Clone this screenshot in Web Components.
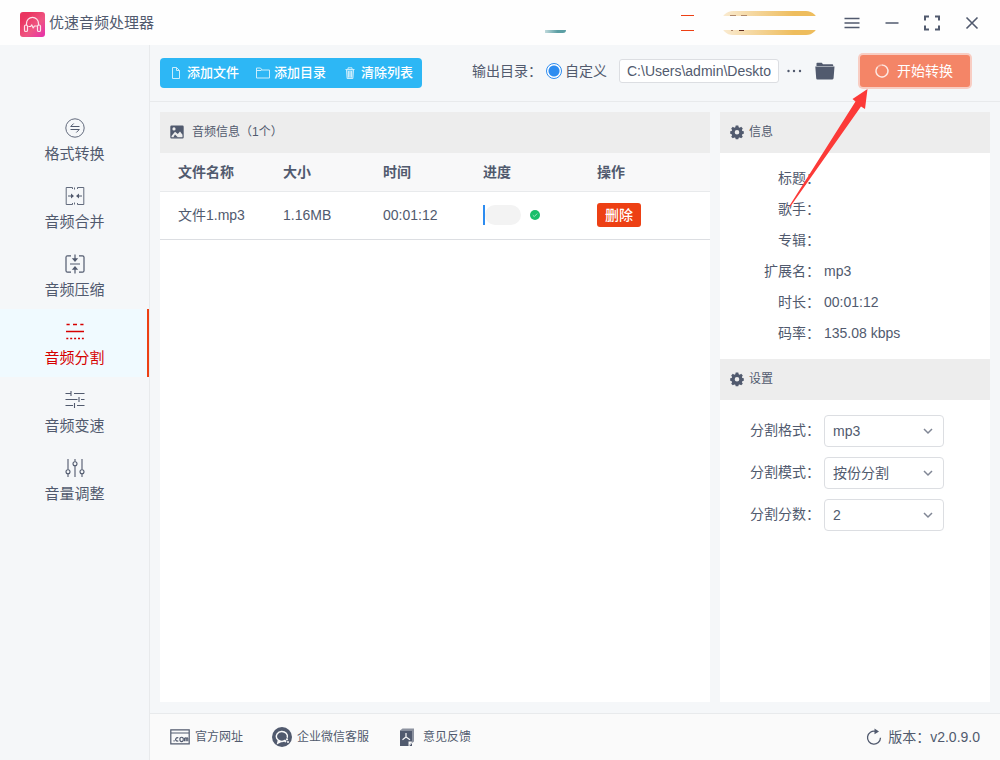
<!DOCTYPE html>
<html lang="zh-CN">
<head>
<meta charset="utf-8">
<meta name="viewport" content="width=device-width, initial-scale=1">
<title>优速音频处理器</title>
<style>
  html, body { margin: 0; }
  body {
    font: 14px/20px "Liberation Sans", "Noto Sans CJK SC", sans-serif;
    color: #515a6e;
    --ink: #515a6e;
    --line: #e8eaec;
    --bg: #f5f7f9;
    --red: #ed4014;
  }
</style>
</head>
<body>
<audio-app></audio-app>
<script>
const define = (name, html, setup) => {
  const tpl = document.createElement('template');
  tpl.innerHTML = html;
  customElements.define(name, class extends HTMLElement {
    constructor() {
      super();
      this.attachShadow({ mode: 'open' }).append(tpl.content.cloneNode(true));
    }
    connectedCallback() { if (setup) setup(this, this.shadowRoot); }
  });
};

const S = 'fill="none" stroke="currentColor"';
const ICONS = {
  logo: ['0 0 25 25', `<defs><linearGradient id="g" x1="0" y1="0" x2="1" y2="1"><stop offset="0.2" stop-color="#ea3560"/><stop offset="0.6" stop-color="#ef5583"/><stop offset="1" stop-color="#e52fae"/></linearGradient></defs><rect width="25" height="25" rx="3" fill="url(#g)"/><g fill="none" stroke="#fde3ea" stroke-width="1.2" stroke-linecap="round" stroke-linejoin="round"><path d="M6.500 13V11.500a6 6.200 0 0 1 12 0V13"/><rect x="4.500" y="13" width="3" height="6.500" rx="1.300"/><rect x="17.500" y="13" width="3" height="6.500" rx="1.300"/><path d="M8.800 14.500h1.800l1.200-1.600 1.400 3 1.300-1.900h2"/></g>`],
  menu: ['0 0 16 16', `<path ${S} stroke-width="1.500" d="M0.500 3.500h15M0.500 8h15M0.500 12.500h15"/>`],
  min: ['0 0 16 16', `<path ${S} stroke-width="1.500" d="M1.500 8h13"/>`],
  full: ['0 0 16 16', `<path ${S} stroke-width="2" d="M1 5.500V1.500h4M11 1.500h4v4M15 10.500v4h-4M5 14.500H1v-4"/>`],
  close: ['0 0 16 16', `<path ${S} stroke-width="1.600" d="M2.500 2.500l11 11M13.500 2.500l-11 11"/>`],
  file: ['0 0 14 14', `<path ${S} d="M3.500 1.500h4l3 3v8h-7zM7.500 1.500v3h3"/>`],
  dir: ['0 0 14 14', `<path ${S} d="M0.500 12V2h4l1.500 2h7.500v8zM0.500 4.500h5"/>`],
  trash: ['0 0 14 14', `<path fill="currentColor" opacity=".4" d="M3.500 4h7l-.6 8.500H4.100z"/><path ${S} d="M2.500 3.500h9M5 3V1.800h4V3M3.500 4l.6 8.500h5.800l.6-8.500M5.500 5v6.500M7 5v6.500M8.500 5v6.500"/>`],
  more: ['0 0 16 16', `<g fill="currentColor"><circle cx="2.500" cy="8" r="1.200"/><circle cx="8" cy="8" r="1.200"/><circle cx="14" cy="8" r="1.200"/></g>`],
  folder: ['0 0 20 18', `<path fill="currentColor" d="M1.500 4V1.500q0-.7.7-.7h4.600l1.200 1.400h9.300q.9 0 .9.900V4z"/><path fill="currentColor" d="M.3 4.600h19.200l-.9 11.400q-.1 1.400-1.200 1.400H2.300q-1 0-1.100-1.200z"/>`],
  spin: ['0 0 16 16', `<circle ${S} cx="8" cy="8" r="6" opacity=".45" stroke-width="1.600"/><path ${S} stroke-width="1.200" opacity=".7" d="M3.500 4a6 6 0 1 0 4.500-2"/>`],
  convert: ['0 0 20 20', `<circle ${S} cx="10" cy="10" r="9.200" stroke-width=".9"/><path ${S} stroke-width="1" d="M14.500 8.500H5.700l3-3M5.500 11.500h8.800l-3 3"/>`],
  merge: ['0 0 20 20', `<path ${S} d="M7.500 3V1.500H1.200v17h6.300V17M12.500 3V1.500h6.300v17h-6.300V17M9.500 1.500v2M9.500 16.500v2" stroke-width=".9"/><path ${S} d="M3 10h4M17 10h-4"/><path fill="currentColor" d="M6 7.500L9 10l-3 2.500zM14 7.500L11 10l3 2.500z"/>`],
  compress: ['0 0 20 20', `<path ${S} stroke-width="1.200" d="M6 1.800H2.500q-1.500 0-1.500 1.500v13.400q0 1.500 1.500 1.500H6M14 1.800h3.500q1.500 0 1.500 1.500v13.400q0 1.500-1.500 1.500H14M5 10h10M10 .5v5M10 19.500v-5"/><path fill="currentColor" d="M6.800 4.300h6.400L10 8zM6.800 15.700h6.400L10 12z"/>`],
  split: ['0 0 20 20', `<path ${S} stroke-width="1.300" d="M1.500 2.500h3.200M8 2.500h4M15.300 2.500h3.200M1 9.500h18"/><path ${S} stroke-width="1.300" stroke-dasharray="2 1.900" d="M1.300 16.500h17.500"/>`],
  speed: ['0 0 20 20', `<path ${S} stroke-width="1.100" d="M.5 3.500h5M9 3.500h10.500M6 1v5M.5 9.500h12M16 9.500h3.500M14 7v5M.5 15.500h7.500M12 15.500h7.500M9.500 13v5"/>`],
  volume: ['0 0 20 20', `<path ${S} stroke-width="1.100" d="M3 1v10.500M3 16v3M10 1v2.500M10 8v11M17 1v10.500M17 16v3"/><g ${S} stroke-width="1.100"><circle cx="3" cy="13.700" r="2"/><circle cx="10" cy="5.700" r="2"/><circle cx="17" cy="13.700" r="2"/></g>`],
  image: ['0 0 14 14', `<path fill="currentColor" fill-rule="evenodd" d="M1.500.5h11q1.200 0 1.200 1.200v10.600q0 1.200-1.200 1.200h-11q-1.200 0-1.200-1.200V1.700Q.3.500 1.500.5zM4 2.300a1.500 1.500 0 1 0 0 3.200 1.500 1.500 0 1 0 0-3.200zM1.500 12.300h11V9.800L10 6.500 7.800 9 5 6.800 1.500 11z"/><path fill="currentColor" d="M3.300 12.500L5 9.500l3 3z"/>`],
  gear: ['0 0 14 14', `<path fill="currentColor" fill-rule="evenodd" d="M5.700.6h2.600l.4 1.700 1 .4 1.500-.9 1.600 1.600-.9 1.600.4.900 1.500.4v2.500l-1.500.4-.4 1 .9 1.500-1.600 1.600-1.500-.9-1 .4-.4 1.500H5.700l-.4-1.500-1-.4-1.500.9-1.600-1.600.9-1.500-.4-1L.2 8.800V6.300l1.500-.4.4-.9-.9-1.600 1.600-1.600 1.500.9 1-.4zM7 5a2.300 2.300 0 1 0 0 4.600A2.300 2.300 0 1 0 7 5z"/>`],
  chevron: ['0 0 14 14', `<path ${S} stroke-width="1.500" d="M3 5l4 4 4-4"/>`],
  done: ['0 0 10 10', `<circle cx="5" cy="5" r="5" fill="#19be6b"/><path fill="none" stroke="#a5e6c5" stroke-width=".9" d="M2.800 5.200l1.500 1.400 2.900-3"/>`],
  com: ['0 0 20 20', `<path ${S} stroke-width="1.200" d="M.8 2.800h18.400v14H.8zM.8 6h18.400"/><path ${S} stroke-width="1.200" d="M3.500 13.900h1.200M8.300 11.100a1.700 1.600 0 1 0 0 2.600M13.200 12.400a1.700 1.600 0 1 0-3.200 0 1.700 1.600 0 1 0 3.200 0M14.600 14.300v-3q1-1 1.600 0v3M16.200 11.300q1-1 1.600 0v3"/>`],
  wechat: ['0 0 20 20', `<circle cx="10" cy="10" r="10" fill="currentColor"/><path fill="none" stroke="#fafafa" stroke-width="1.500" d="M13.500 13.200a5.600 4.900 0 1 1 1.800-2.500M6.500 13.300L5.800 16l3-1.500"/><circle cx="15" cy="12.300" r="1.100" fill="#fafafa"/><circle cx="13.300" cy="14.300" r="1.100" fill="#fafafa"/><circle cx="16" cy="15" r="1" fill="#fafafa"/>`],
  feedback: ['0 0 20 20', `<path fill="currentColor" d="M2 3.500h12v11L10.500 19H2z"/><path fill="currentColor" opacity=".65" d="M2 3.500L4.500 1.500H16v13l-2 1.500V3.500z"/><path fill="#fafafa" d="M10.500 19v-4.500H14z"/><path fill="currentColor" d="M11.300 19l2.700-3v3z"/><path fill="none" stroke="#fafafa" stroke-width="1.200" d="M8 6v4l-3.500 2.700M8 10l4 2.700"/>`],
  refresh: ['0 0 18 18', `<path ${S} stroke-width="1.300" d="M10.500 3.300a6.500 6.500 0 1 0 5 6.500"/><path fill="currentColor" d="M9.500.5l4.500 3-4.500 2.700z"/>`]
};

define('app-icon', `<style>
  :host { display: block; flex: none; width: 14px; height: 14px; }
  svg { display: block; width: 100%; height: 100%; overflow: visible; }
</style><svg aria-hidden="true"></svg>`, (el, root) => {
  const [box, body] = ICONS[el.getAttribute('name')];
  const svg = root.querySelector('svg');
  svg.setAttribute('viewBox', box);
  svg.innerHTML = body;
});

const placeIcon = (el, root) => {
  const icon = document.createElement('app-icon');
  icon.setAttribute('name', el.getAttribute('icon'));
  root.querySelector('i').replaceWith(icon);
};

define('title-bar', `<style>
  :host { display: flex; align-items: center; height: 45px; padding: 0 20px; box-sizing: border-box; background: #fefefe; }
  .logo { width: 25px; height: 25px; margin: 3px 4px 0 0; }
  h1 { margin: 0; font-size: 15px; font-weight: 400; line-height: 20px; flex: 1; }
  .extras { display: flex; align-items: center; margin-right: 26px; }
  .teal { width: 21px; height: 3px; margin: 18px 115px 0 0; border-radius: 0 0 4px; background: linear-gradient(90deg, #b5d3d6, #3f8e94 60%); opacity: .85; }
  .badge { width: 13px; height: 14px; margin-right: 27px; border: solid var(--red); border-width: 1px 0; }
  .vip { width: 97px; height: 24px; border-radius: 12px; background:
    linear-gradient(90deg, #b0886a 6px, transparent 6px 11px, #b0886a 11px) 9px 4px / 17px 1px no-repeat,
    linear-gradient(90deg, #b0886a 2px, transparent 2px 8px, #5f2d20 8px) 10px 19px / 13px 1px no-repeat,
    linear-gradient(#fefefe, #fefefe) 0 5px / 100% 14px no-repeat,
    linear-gradient(90deg, #faecd4, #eebd5d 75%); }
  nav { display: flex; gap: 24px; }
  button { all: unset; display: block; width: 16px; height: 16px; }
  button app-icon { width: 16px; height: 16px; }
</style>
<app-icon class="logo" name="logo"></app-icon><h1>优速音频处理器</h1>
<div class="extras"><div class="teal"></div><div class="badge"></div><div class="vip"></div></div>
<nav>
  <button aria-label="菜单"><app-icon name="menu"></app-icon></button>
  <button aria-label="最小化"><app-icon name="min"></app-icon></button>
  <button aria-label="全屏"><app-icon name="full"></app-icon></button>
  <button aria-label="关闭"><app-icon name="close"></app-icon></button>
</nav>`);

define('nav-item', `<style>
  :host { display: block; }
  a { display: flex; flex-direction: column; align-items: center; gap: 6px; box-sizing: border-box; height: 68px; padding-top: 13px; font-size: 15px; line-height: 20px; color: inherit; text-decoration: none; }
  app-icon { width: 20px; height: 20px; }
  :host([active]) a { color: #d60000; background: #f0faff; box-shadow: inset -2px 0 var(--red); }
</style><a href="#"><i></i><slot></slot></a>`, (el, root) => {
  placeIcon(el, root);
  if (el.hasAttribute('active')) root.querySelector('a').setAttribute('aria-current', 'page');
});

define('side-nav', `<style>
  :host { display: block; flex: none; width: 149px; padding-top: 60px; border-right: 1px solid var(--line); }
</style><nav>
  <nav-item icon="convert">格式转换</nav-item>
  <nav-item icon="merge">音频合并</nav-item>
  <nav-item icon="compress">音频压缩</nav-item>
  <nav-item icon="split" active>音频分割</nav-item>
  <nav-item icon="speed">音频变速</nav-item>
  <nav-item icon="volume">音量调整</nav-item>
</nav>`);

define('tool-bar', `<style>
  :host { display: flex; align-items: center; box-sizing: border-box; height: 57px; padding: 0 30px 0 10px; border-bottom: 1px solid var(--line); }
  button { all: unset; display: flex; align-items: center; }
  .group { display: flex; align-items: center; gap: 17px; height: 30px; padding: 0 9px; border-radius: 4px; background: #2db7f5; color: #fff; }
  .group button { gap: 4px; font-size: 13px; font-weight: 500; line-height: 20px; }
  .group app-icon { opacity: .75; }
  .out { display: flex; align-items: center; margin-left: auto; }
  .out, .start { padding-bottom: 4px; }
  .custom { display: flex; align-items: center; gap: 3px; margin: 0 12px 0 4px; }
  [type=radio] { appearance: none; box-sizing: border-box; width: 16px; height: 16px; margin: 0; border: 1px solid #2d8cf0; border-radius: 50%; background: radial-gradient(circle, #2d8cf0 5px, #fff 6px); }
  [type=text] { box-sizing: border-box; width: 160px; height: 24px; padding: 0 7px; border: 1px solid #dcdee2; border-radius: 3px; background: #fff; color: inherit; font: inherit; outline: 0; }
  .more { margin-left: 7px; }
  .more app-icon { width: 16px; height: 16px; }
  .open { margin: 0 25px 0 13px; }
  .open app-icon { width: 20px; height: 18px; }
  .start { position: relative; }
  .start button { box-sizing: border-box; gap: 7px; width: 110px; height: 32px; padding-left: 14px; border-radius: 3px; background: #f48567; color: #fff; box-shadow: 0 0 0 2px #f8cdc3; }
  .start app-icon { width: 16px; height: 16px; }
  .start svg { position: absolute; z-index: 2; right: 100px; top: 33px; width: 82px; height: 120px; pointer-events: none; }
</style>
<div class="group">
  <button><app-icon name="file"></app-icon>添加文件</button>
  <button><app-icon name="dir"></app-icon>添加目录</button>
  <button><app-icon name="trash"></app-icon>清除列表</button>
</div>
<div class="out">
  <span>输出目录：</span>
  <label class="custom"><input type="radio" name="out" checked>自定义</label>
  <input type="text" aria-label="输出目录" value="C:\\Users\\admin\\Deskto">
  <button class="more" aria-label="更多"><app-icon name="more"></app-icon></button>
  <button class="open" aria-label="打开目录"><app-icon name="folder"></app-icon></button>
</div>
<div class="start"><button><app-icon name="spin"></app-icon>开始转换</button>
<svg viewBox="0 0 82 120" aria-hidden="true"><path fill="#fc3a38" d="M79.500 1L64.500 11l3 2.500L1 118.500l1 .5 71-100.500 4 2.500z"/></svg></div>`);

define('panel-head', `<style>
  :host { display: flex; align-items: center; gap: 5px; height: 39px; padding: 0 10px 2px; background: #ededed; }
  h2 { margin: 0; font-size: 12px; font-weight: 400; line-height: 20px; }
  :host([wide]) { gap: 8px; }
</style><i></i><h2><slot></slot></h2>`, placeIcon);

define('file-list', `<style>
  :host { display: block; flex: 1; min-width: 0; background: #fff; }
  table { width: 100%; border-collapse: separate; border-spacing: 0; table-layout: fixed; }
  th, td { box-sizing: border-box; padding: 0 0 0 18px; text-align: left; white-space: nowrap; }
  th { height: 39px; background: #f8f8f9; font-weight: 700; border-bottom: 1px solid var(--line); }
  td { height: 48px; padding-bottom: 2px; border-bottom: 1px solid #dcdee2; }
  .name { width: 105px; } .short { width: 100px; } .bar { width: 114px; }
  .progress { display: flex; align-items: center; }
  .track { width: 36px; height: 20px; margin-right: 9px; border-left: 2px solid #2d8cf0; }
  .track::before { content: ""; display: block; height: 20px; border-radius: 10px; background: #f3f3f3; }
  .progress app-icon { width: 10px; height: 10px; }
  button { all: unset; display: block; width: 44px; height: 24px; border-radius: 3px; background: var(--red); color: #fff; font-weight: 500; line-height: 24px; text-align: center; }
</style>
<panel-head icon="image" wide>音频信息（1个）</panel-head>
<table>
  <thead><tr><th class="name">文件名称</th><th class="short">大小</th><th class="short">时间</th><th class="bar">进度</th><th>操作</th></tr></thead>
  <tbody><tr><td>文件1.mp3</td><td>1.16MB</td><td>00:01:12</td><td><div class="progress"><div class="track"></div><app-icon name="done"></app-icon></div></td><td><button>删除</button></td></tr></tbody>
</table>`);

define('info-row', `<style>
  :host { display: grid; grid-template-columns: 100px 1fr; gap: 4px; line-height: 31px; }
  dt, dd { margin: 0; }
  dt { text-align: right; }
</style><dt><slot name="label"></slot></dt><dd><slot></slot></dd>`);

define('setting-row', `<style>
  :host { display: grid; grid-template-columns: 100px 120px; gap: 4px; line-height: 30px; }
  label { text-align: right; }
  .box { display: grid; align-items: center; }
  select, app-icon { grid-area: 1 / 1; }
  select { appearance: none; width: 120px; height: 32px; padding: 0 24px 0 8px; border: 1px solid #dcdee2; border-radius: 4px; background: #fff; color: inherit; font: inherit; outline: 0; }
  app-icon { justify-self: end; margin-right: 9px; color: #808695; pointer-events: none; }
</style><label for="s"></label><div class="box"><select id="s"><option></option></select><app-icon name="chevron"></app-icon></div>`, (el, root) => {
  root.querySelector('label').textContent = el.getAttribute('label');
  root.querySelector('option').textContent = el.getAttribute('value');
});

define('detail-panel', `<style>
  :host { display: block; flex: none; width: 270px; background: #fff; }
  dl { margin: 0; padding: 10px 0; }
  form { display: grid; gap: 10px; padding: 15px 0; }
</style>
<panel-head icon="gear">信息</panel-head>
<dl>
  <info-row><span slot="label">标题：</span></info-row>
  <info-row><span slot="label">歌手：</span></info-row>
  <info-row><span slot="label">专辑：</span></info-row>
  <info-row><span slot="label">扩展名：</span>mp3</info-row>
  <info-row><span slot="label">时长：</span>00:01:12</info-row>
  <info-row><span slot="label">码率：</span>135.08 kbps</info-row>
</dl>
<panel-head icon="gear">设置</panel-head>
<form>
  <setting-row label="分割格式：" value="mp3"></setting-row>
  <setting-row label="分割模式：" value="按份分割"></setting-row>
  <setting-row label="分割分数：" value="2"></setting-row>
</form>`);

define('status-bar', `<style>
  :host { display: flex; align-items: center; gap: 29px; height: 46px; padding: 0 20px; border-top: 1px solid var(--line); background: #fafafa; }
  a, .version { display: flex; align-items: center; gap: 5px; color: inherit; text-decoration: none; }
  a { font-size: 12px; }
  app-icon { width: 20px; height: 20px; }
  .version { margin-left: auto; }
  .version app-icon { width: 18px; height: 18px; }
</style>
<a href="#"><app-icon name="com"></app-icon>官方网址</a>
<a href="#"><app-icon name="wechat"></app-icon>企业微信客服</a>
<a href="#"><app-icon name="feedback"></app-icon>意见反馈</a>
<div class="version"><app-icon name="refresh"></app-icon><span>版本：v2.0.9.0</span></div>`);

define('audio-app', `<style>
  :host { display: flex; flex-direction: column; min-height: 100vh; background: var(--bg); }
  .body { display: flex; flex: 1; }
  main { display: flex; flex-direction: column; flex: 1; min-width: 0; }
  .panels { display: flex; flex: 1; gap: 10px; padding: 10px 10px 11px; }
</style>
<title-bar></title-bar>
<div class="body">
  <side-nav></side-nav>
  <main>
    <tool-bar></tool-bar>
    <div class="panels"><file-list></file-list><detail-panel></detail-panel></div>
    <status-bar></status-bar>
  </main>
</div>`);
</script>
</body>
</html>
